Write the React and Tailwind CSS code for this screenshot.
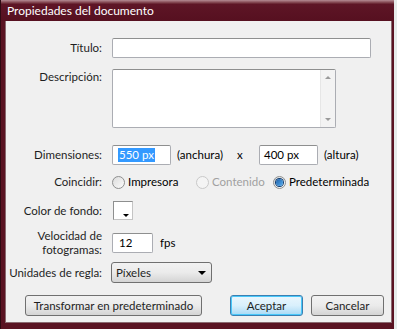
import React from 'react';

function Radio({ checked, disabled }) {
  return (
    <span
      className={`relative inline-flex h-[13px] w-[13px] shrink-0 items-center justify-center rounded-full border ${
        disabled ? 'border-[#c9c9c9] bg-[#f4f4f4]' : 'border-[#8e8f8f] bg-gradient-to-br from-[#dcdcdc] to-[#fbfbfb]'
      }`}
    >
      {checked && (
        <span className="h-[7px] w-[7px] rounded-full bg-gradient-to-br from-[#1b5ea8] to-[#5ab0f0] ring-1 ring-[#0d3a6e]" />
      )}
    </span>
  );
}

function Label({ children, className = '' }) {
  return <div className={`w-[96px] shrink-0 text-right text-[#1e1e1e] ${className}`}>{children}</div>;
}

const inputCls = 'h-[20px] bg-white border border-[#abadb3] border-t-[#8e8f8f] rounded-[2px] flex items-center';
const btnCls =
  'h-[21px] rounded-[3px] border border-[#707070] bg-gradient-to-b from-[#f2f2f2] via-[#ebebeb] to-[#d4d4d4] flex items-center text-[#1e1e1e]';

export default function App() {
  return (
    <div className="w-[397px] h-[329px] bg-[#e6ebea] text-[11.5px] leading-[14px] [font-family:Lato,sans-serif]">
      <div className="w-[394px] h-[329px] flex flex-col bg-[#5a1322] border-l-[1px] border-[#2e0a12]">
        {/* title bar */}
        <div className="h-[21px] shrink-0 bg-gradient-to-b from-[#b58c95] via-[#5e1526] via-20% to-[#561020] flex items-center pl-[6px] text-white text-[12px]">
          Propiedades del documento
        </div>
        <div className="flex-1 ml-[4px] mr-[2px] mb-[6px] bg-[#f0f0f0] border border-[#8a6a70] border-t-0 flex flex-col">
          {/* Título */}
          <div className="mt-[17px] flex items-center">
            <Label>Título:</Label>
            <div className={`${inputCls} ml-[10px] w-[259px]`} />
          </div>

          {/* Descripción */}
          <div className="mt-[11px] flex items-start">
            <Label className="pt-[1px]">Descripción:</Label>
            <div className="ml-[10px] w-[224px] h-[59px] bg-white border border-[#abadb3] border-t-[#8e8f8f] rounded-[2px] flex justify-end">
              <div className="w-[15px] h-full bg-[#f3f3f3] border-l border-[#e6e6e6] flex flex-col items-center justify-between py-[6px]">
                <span className="w-0 h-0 border-l-[3px] border-r-[3px] border-b-[3px] border-l-transparent border-r-transparent border-b-[#9a9a9a]" />
                <span className="w-0 h-0 border-l-[3px] border-r-[3px] border-t-[3px] border-l-transparent border-r-transparent border-t-[#9a9a9a]" />
              </div>
            </div>
          </div>

          {/* Dimensiones */}
          <div className="mt-[17px] flex items-center">
            <Label>Dimensiones:</Label>
            <div className={`${inputCls} ml-[10px] w-[59px] pl-[5px]`}>
              <span className="bg-[#3399ff] text-white px-[1px]">550 px</span>
            </div>
            <span className="ml-[6px] w-[60px]">(anchura)</span>
            <span className="w-[22px]">x</span>
            <div className={`${inputCls} w-[59px] pl-[4px]`}>400 px</div>
            <span className="ml-[6px]">(altura)</span>
          </div>

          {/* Coincidir */}
          <div className="mt-[7px] h-[20px] flex items-center">
            <Label>Coincidir:</Label>
            <div className="ml-[10px] w-[84px] flex items-center gap-[3px]">
              <Radio />
              <span>Impresora</span>
            </div>
            <div className="w-[77px] flex items-center gap-[3px]">
              <Radio disabled />
              <span className="text-[#a0a0a0]">Contenido</span>
            </div>
            <div className="flex items-center gap-[3px]">
              <Radio checked />
              <span>Predeterminada</span>
            </div>
          </div>

          {/* Color de fondo */}
          <div className="mt-[9px] flex items-center">
            <Label>Color de fondo:</Label>
            <div className="ml-[11px] w-[20px] h-[19px] bg-white border border-[#8e8f8f] border-r-[#c4c4c4] border-b-[#c4c4c4] relative">
              <span className="absolute right-[3px] bottom-[2px] w-0 h-0 border-l-[3px] border-r-[3px] border-t-[3px] border-l-transparent border-r-transparent border-t-black" />
            </div>
          </div>

          {/* Velocidad */}
          <div className="mt-[9px] flex items-center">
            <Label>
              Velocidad de
              <br />
              fotogramas:
            </Label>
            <div className={`${inputCls} ml-[10px] w-[41px] pl-[6px]`}>12</div>
            <span className="ml-[7px]">fps</span>
          </div>

          {/* Unidades */}
          <div className="mt-[5px] flex items-center">
            <Label className="whitespace-nowrap">Unidades de regla:</Label>
            <div className={`${btnCls} ml-[9px] w-[101px] justify-between pl-[4px] pr-[5px]`}>
              <span>Píxeles</span>
              <span className="w-0 h-0 border-l-[4px] border-r-[4px] border-t-[4px] border-l-transparent border-r-transparent border-t-black" />
            </div>
          </div>

          {/* buttons */}
          <div className="mt-[12px] flex items-center">
            <div className={`${btnCls} justify-center ml-[19px] w-[177px]`}>Transformar en predeterminado</div>
            <div className="ml-[28px] w-[73px] h-[21px] rounded-[3px] border border-[#3c7fb1] bg-gradient-to-b from-[#eaf6fd] via-[#d9f0fc] to-[#a7d9f5] shadow-[inset_0_0_0_1px_#48c8fa] flex items-center justify-center text-[#1e1e1e]">
              Aceptar
            </div>
            <div className={`${btnCls} justify-center ml-[8px] w-[73px]`}>Cancelar</div>
          </div>
        </div>
      </div>
    </div>
  );
}
